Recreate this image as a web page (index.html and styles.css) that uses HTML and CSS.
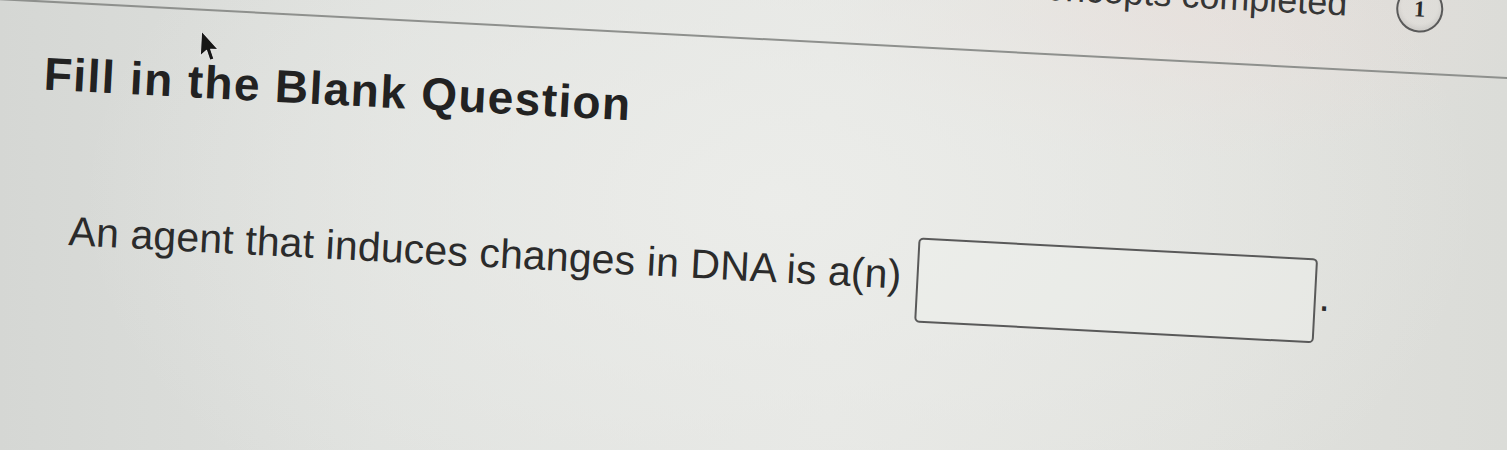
FILE: index.html
```html
<!DOCTYPE html>
<html lang="en">
<head>
<meta charset="utf-8">
<title>Fill in the Blank Question</title>
<link rel="stylesheet" href="styles.css">
</head>
<body>
<div class="screen">
  <div class="page">
    <header class="topbar">
      <span class="progress">0 of 4 Concepts completed</span>
      <span class="badge">1</span>
    </header>
    <main class="question">
      <h1 class="title">Fill in the Blank Question</h1>
      <div class="prompt">
        <span class="prompt-text">An agent that induces changes in DNA is a(n)</span>
        <span class="blank"></span>
        <span class="prompt-end">.</span>
      </div>
    </main>
    <svg class="cursor" width="24" height="34" viewBox="0 0 17 26" aria-hidden="true">
      <path d="M1 1 L1 20 L5.5 15.5 L8.5 23 L11.5 21.8 L8.6 14.5 L14.5 14.5 Z" fill="#161616" stroke="#e6e6e6" stroke-width="0.8" stroke-linejoin="round"/>
    </svg>
  </div>
</div>
</body>
</html>
```
FILE: styles.css
```css
html, body {
  margin: 0;
  padding: 0;
}

body {
  width: 1507px;
  height: 450px;
  overflow: hidden;
  font-family: "Liberation Sans", Arial, sans-serif;
  color: #262626;
  background:
    radial-gradient(ellipse 700px 420px at 780px 200px, rgba(236, 237, 234, 0.9), rgba(236, 237, 234, 0) 100%),
    radial-gradient(ellipse 360px 140px at 1180px 20px, rgba(230, 220, 216, 0.8), rgba(230, 220, 216, 0) 100%),
    linear-gradient(90deg, #d5d7d4 0%, #dfe1de 25%, #e5e6e3 55%, #e0e1dd 80%, #dbdcd8 100%);
}

.screen {
  width: 1620px;
  transform: rotate(3deg);
  transform-origin: 0 0;
}

.page {
  position: relative;
  margin-top: -100px;
}

.topbar {
  height: 98px;
  display: flex;
  justify-content: flex-end;
  align-items: flex-start;
  gap: 49px;
  padding-right: 173px;
  border-bottom: 2px solid #8e908d;
}

.progress {
  margin-top: 13px;
  font-size: 36px;
  line-height: 40px;
  color: #363636;
  white-space: nowrap;
}

.badge {
  margin-top: 11px;
  width: 43px;
  height: 43px;
  border: 2px solid #5a5a5a;
  border-radius: 50%;
  display: flex;
  align-items: center;
  justify-content: center;
  font-family: "Liberation Serif", "Times New Roman", serif;
  font-weight: bold;
  font-size: 23px;
  color: #2a2a2a;
  box-shadow: inset 0 -3px 4px rgba(0, 0, 0, 0.08);
}

.question {
  padding-left: 53px;
}

.title {
  margin: 44px 0 0;
  font-size: 46px;
  line-height: 55px;
  font-weight: bold;
  letter-spacing: 1.4px;
  color: #222;
}

.prompt {
  margin-top: 90px;
  margin-left: 33px;
  display: flex;
  align-items: flex-start;
}

.prompt-text,
.prompt-end {
  margin-top: 14px;
  font-size: 41px;
  line-height: 48px;
  letter-spacing: 0.15px;
  color: #2b2b2b;
  white-space: nowrap;
}

.blank {
  margin-left: 15px;
  width: 396px;
  height: 81px;
  border: 2px solid #595959;
  border-radius: 5px;
  background: rgba(238, 239, 236, 0.5);
}

.prompt-end {
  margin-left: 3px;
}

.cursor {
  position: absolute;
  left: 206px;
  top: 119px;
}
```
